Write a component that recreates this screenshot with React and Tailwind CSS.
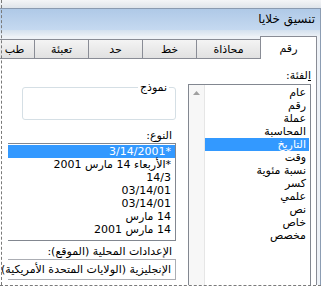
import React from 'react';

const tabs = [
  { label: 'رقم', width: 'w-[57px]', active: true },
  { label: 'محاذاة', width: 'w-[64px]' },
  { label: 'خط', width: 'w-[54px]' },
  { label: 'حد', width: 'w-[54px]' },
  { label: 'تعبئة', width: 'w-[54px]' },
  { label: 'طب', width: 'w-[40px]' },
];

const categories = [
  'عام',
  'رقم',
  'عملة',
  'المحاسبة',
  'التاريخ',
  'وقت',
  'نسبة مئوية',
  'كسر',
  'علمي',
  'نص',
  'خاص',
  'مخصص',
];

const types = [
  '*3/14/2001',
  '*الأربعاء 14 مارس 2001',
  '14/3',
  '03/14/01',
  '03/14/01',
  '14 مارس',
  '14 مارس 2001',
];

const App = () => {
  return (
    <div
      dir="rtl"
      className="relative w-[321px] h-[289px] overflow-hidden bg-white text-black text-[11px] leading-[13px] font-['DejaVu_Sans',Tahoma,sans-serif]"
    >
      {/* top edge */}
      <div className="h-[9px] bg-gradient-to-b from-[#f4f5f7] to-[#dfe4ea] border-b border-[#8a9ab0]" />

      <div className="flex h-[276px]">
        {/* right window frame */}
        <div className="w-[6px] bg-gradient-to-b from-[#c9d9ea] to-[#dfe7f0] border-l border-[#8c9db3]" />

        <div className="flex-1 flex flex-col bg-[#eef2f7]">
          {/* title bar */}
          <div className="h-[21px] flex items-center pr-[5px] bg-gradient-to-b from-[#afc9e7] to-[#c5d9f0] text-[12px]">
            تنسيق خلايا
          </div>
          <div className="h-[6px] bg-gradient-to-b from-[#d3e0ee] to-[#eaeff5]" />

          {/* tabs */}
          <div className="flex items-end h-[23px] pr-[3px]">
            {tabs.map((tab) =>
              tab.active ? (
                <div
                  key={tab.label}
                  className={`${tab.width} h-[23px] shrink-0 flex items-center justify-center bg-white border-t border-l border-r border-[#898c95]`}
                >
                  {tab.label}
                </div>
              ) : (
                <div
                  key={tab.label}
                  className={`${tab.width} h-[20px] shrink-0 flex items-center justify-center bg-gradient-to-b from-[#f4f4f4] to-[#e1e1e1] border-t border-l border-b border-[#898c95] overflow-hidden`}
                >
                  {tab.label}
                </div>
              )
            )}
          </div>

          {/* page */}
          <div className="flex-1 mr-[3px] bg-white border-r border-[#898c95] flex">
            {/* category column */}
            <div className="w-[123px] mr-[5px] shrink-0 flex flex-col">
              <div className="h-[25px] pt-[10px]">
                <span className="underline">ا</span>لفئة:
              </div>
              <div className="flex-1 flex border border-[#828790] border-b-0 bg-white">
                <div className="flex-1 pt-px pr-px">
                  {categories.map((c) =>
                    c === 'التاريخ' ? (
                      <div key={c} className="h-[13px] pr-[3px] bg-[#3399ff] text-white">
                        {c}
                      </div>
                    ) : (
                      <div key={c} className="h-[13px] pr-[3px]">
                        {c}
                      </div>
                    )
                  )}
                </div>
                <div className="w-[16px] bg-[#f7f7f7] border-r border-[#e6e6e6] flex justify-center pt-[6px]">
                  <svg width="7" height="4" viewBox="0 0 7 4">
                    <path d="M0 4 L3.5 0 L7 4 Z" fill="#a0a0a0" />
                  </svg>
                </div>
              </div>
            </div>

            {/* left column */}
            <div className="w-[168px] mr-[12px] shrink-0 flex flex-col">
              {/* sample */}
              <div className="relative mt-[28px] ml-[14px] h-[33px] border border-[#d5dfe5] rounded-[3px]">
                <span className="absolute -top-[7px] right-[6px] px-[2px] bg-white">نموذج</span>
              </div>

              <div className="mt-[9px] h-[13px] pr-[4px]">النوع:</div>

              <div className="mt-[1px] h-[98px] border border-[#828790] border-l-0 pt-px">
                {types.map((t, i) =>
                  i === 0 ? (
                    <div key={i} className="h-[13px] pr-[4px] bg-[#3399ff] text-white">
                      {t}
                    </div>
                  ) : (
                    <div key={i} className="h-[13px] pr-[4px]">
                      {t}
                    </div>
                  )
                )}
              </div>

              <div className="mt-[4px] h-[13px] pr-[4px]">الإعدادات المحلية (الموقع):</div>

              <div className="mt-[1px] h-[21px] border border-[#abadb3] border-l-0 flex items-center pr-[4px] whitespace-nowrap">
                الإنجليزية (الولايات المتحدة الأمريكية)
              </div>
            </div>
          </div>
        </div>
      </div>

      {/* crop marks */}
      <div className="absolute left-[1px] top-0 bottom-[4px] border-l border-dashed border-[#7a7a7a]" />
      <div className="absolute left-0 right-0 top-[285px] h-[4px] bg-white border-t border-dashed border-[#7a7a7a]" />
    </div>
  );
};

export default App;
